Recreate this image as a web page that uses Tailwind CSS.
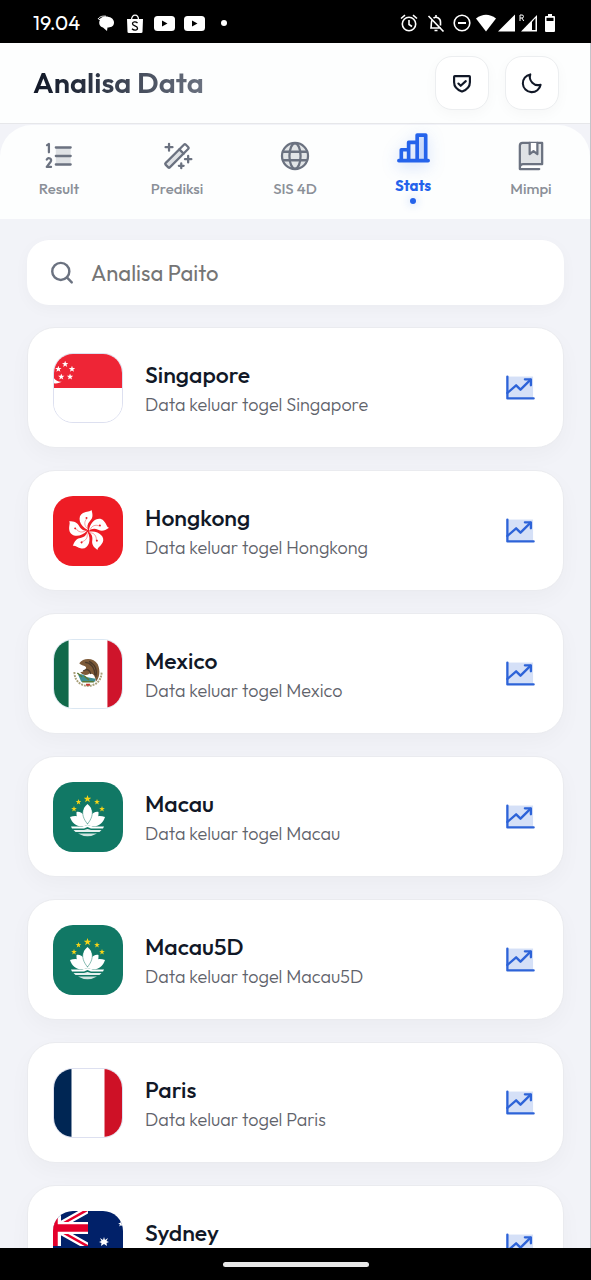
<!DOCTYPE html>
<html lang="id">
  <head>
    <meta charset="UTF-8" />
    <meta name="viewport" content="width=device-width, initial-scale=1.0" />
    <title>Analisa Data</title>
    <script src="https://cdn.jsdelivr.net/npm/@tailwindcss/browser@4"></script>
  </head>
  <body class="bg-black font-['Outfit',Lato,sans-serif]">
    <!-- Shared shapes -->
    <svg class="hidden" aria-hidden="true">
      <symbol id="chart" viewBox="0 0 256 256">
        <path d="M32 48H220V208H32Z" fill="currentColor" opacity=".2" />
        <g fill="none" stroke="currentColor" stroke-width="17" stroke-linecap="round" stroke-linejoin="round">
          <path d="M32 48V208H224" />
          <path d="M32 168L96 112L128 144L200 72" />
          <path d="M160 68H204V112" />
        </g>
      </symbol>
      <symbol id="star" viewBox="0 0 20 20">
        <path d="M10 0L12.4 6.8L19.5 6.9L13.8 11.2L15.9 18.1L10 14L4.1 18.1L6.2 11.2L.5 6.9L7.6 6.8Z" />
      </symbol>
      <symbol id="youtube" viewBox="0 0 21 15">
        <rect width="21" height="15" rx="3.5" fill="#fff" />
        <path d="M8 4.5L13.5 7.5L8 10.5Z" fill="#000" />
      </symbol>
      <symbol id="macau" viewBox="0 0 70 70">
        <rect width="70" height="70" fill="#117865" />
        <g fill="#f7d417">
          <use href="#star" x="30.5" y="13" width="8" height="8" />
          <use href="#star" x="22.5" y="17" width="6" height="6" />
          <use href="#star" x="41" y="17" width="6" height="6" />
          <use href="#star" x="18" y="24" width="6" height="6" />
          <use href="#star" x="46" y="24" width="6" height="6" />
        </g>
        <g fill="#fff">
          <path d="M34.5 22C40.5 27 41.5 34 34.5 42C27.500 34 28.500 27 34.500 22Z" />
          <path d="M23.5 30C29 29 33 34 34.500 43C26 42 23 36 23.500 30Z" />
          <path d="M45.5 30C40 29 36 34 34.500 43C43 42 46 36 45.500 30Z" />
          <path d="M17 35C25 32 32 36 34.500 43C27 46 20 44 17 35Z" />
          <path d="M52 35C44 32 37 36 34.500 43C42 46 49 44 52 35Z" />
          <path d="M18 44.5H29L34.5 43L40 44.5H51L50 46.5H38L34.5 45L31 46.5H19Z" />
          <path d="M20.5 48H31L34.5 47L38 48H48.5L46.5 50H22.5Z" opacity=".9" />
          <path d="M25 51.5H44Q34.5 57 25 51.5Z" opacity=".8" />
        </g>
        <path d="M30.5 26C28.500 32 30.500 37 34.500 42C38.500 37 40.500 32 38.500 26" fill="none" stroke="#117865" stroke-width=".5" />
      </symbol>
    </svg>

    <div class="flex h-screen flex-col overflow-hidden">
      <!-- Status bar -->
      <div class="flex h-[43px] shrink-0 items-center justify-between bg-black pr-[36px] pl-[33px] pt-[3px] text-white">
        <div class="flex items-center">
          <span class="w-[64px] text-[20px] leading-5">19.04</span>
          <svg class="mr-3 h-[17px] w-[18px]" viewBox="0 0 18 17"><path d="M4 3C8 0 17 2 17 7.5C17 12 13 12.5 10.5 12.5L10 16L6 12.5C2 11.5 1.5 7 3 5L1 5Z" fill="#fff" /><path d="M1 4C3 1 6 1 9 1.2" stroke="#fff" stroke-width="1" fill="none" /></svg>
          <svg class="mr-[11px] h-[19px] w-4" viewBox="0 0 16 19"><path d="M0 5H16L15.5 18Q15.5 19 14 19H2Q.5 19 .5 18Z" fill="#fff" /><path d="M4.5 6C4.5-.5 11.5-.5 11.5 6" stroke="#fff" fill="none" stroke-width="1.3" /><path d="M10.5 9C9 7.5 5.5 7.5 5.5 9.8C5.5 12.3 10.5 11.5 10.5 14.2C10.5 16.7 6.5 16.5 5 14.8" stroke="#000" fill="none" stroke-width="1.3" /></svg>
          <svg class="mr-[9px] h-[15px] w-[21px]"><use href="#youtube" /></svg>
          <svg class="mr-4 h-[15px] w-[21px]"><use href="#youtube" /></svg>
          <span class="size-[6px] rounded-full bg-white"></span>
        </div>
        <div class="flex items-center">
          <svg class="mr-[9px] size-[18px]" viewBox="0 0 18 18" fill="none" stroke="#fff" stroke-width="1.6"><circle cx="9" cy="10" r="6.7" /><path d="M9 6V10.5L12 12.5M1 4.5L5 1.2M17 4.5L13 1.2" /></svg>
          <svg class="mr-2 size-[18px]" viewBox="0 0 18 18" fill="none" stroke="#fff" stroke-width="1.6"><path d="M5 6C4 8 4.5 11 4 14H14M6.5 4.2C9 2 13.5 4 13.5 8V11.5M9 1V3.5M7.5 16.5H10.5M1.5 2L16.5 17.5" /></svg>
          <svg class="mr-[5px] size-[18px]" viewBox="0 0 18 18" fill="none" stroke="#fff" stroke-width="1.6"><circle cx="9" cy="9" r="7.8" /><path d="M5 9H13" stroke-width="2" /></svg>
          <svg class="mr-[2px] h-[18px] w-5" viewBox="0 0 20 18"><path d="M0 4.5Q10-3 20 4.5L10 17.5Z" fill="#fff" /></svg>
          <svg class="mr-1 h-[18px] w-[17px]" viewBox="0 0 17 18"><path d="M17 .5V17.5H0Z" fill="#fff" /></svg>
          <svg class="mr-[7px] h-[18px] w-[19px]" viewBox="0 0 19 18"><path d="M18 1V17.5H2Z" fill="#fff" /><path d="M13 8L16.5 4V16H13Z" fill="#000" /><path d="M1 7V1H3Q4.5 1 4.5 2.5T3 4H1M3 4L4.7 7" fill="none" stroke="#fff" /></svg>
          <svg class="h-[18px] w-[10px]" viewBox="0 0 10 18"><path d="M3 0H7V2H9Q10 2 10 3V17Q10 18 9 18H1Q0 18 0 17V3Q0 2 1 2H3Z" fill="#fff" /><path d="M1.5 3.8H8.5V7H1.5Z" fill="#000" /></svg>
        </div>
      </div>

      <div class="flex min-h-0 flex-1 flex-col border-r border-[#c3c5ca] bg-[#f2f3f8]">
        <!-- Header -->
        <header class="flex h-[81px] shrink-0 items-center justify-between border-b border-[#e6e7ea] bg-[#fdfefe] pr-[31px] pl-[33px]">
          <h1 class="bg-gradient-to-r from-[#111827] to-[#6b7280] bg-clip-text text-[29px] leading-9 font-semibold text-transparent">Analisa Data</h1>
          <div class="flex gap-4">
            <button type="button" aria-label="Keamanan" class="flex size-[54px] items-center justify-center rounded-[17px] border border-[#eceef0] bg-white text-[#111827] shadow-[0_4px_14px_rgba(0,0,0,0.03)]">
              <svg class="size-[22px]" viewBox="0 0 256 256" fill="none" stroke="currentColor" stroke-width="25" stroke-linecap="round" stroke-linejoin="round"><path d="M36 118V56A8 8 0 0 1 44 48H212A8 8 0 0 1 220 56V118C220 194 143 221 128 227C113 221 36 194 36 118Z" /><path d="M172 106L113 160L86 134" /></svg>
            </button>
            <button type="button" aria-label="Mode gelap" class="flex size-[54px] items-center justify-center rounded-[17px] border border-[#eceef0] bg-white text-[#111827] shadow-[0_4px_14px_rgba(0,0,0,0.03)]">
              <svg class="size-[22px]" viewBox="0 0 256 256" fill="none" stroke="currentColor" stroke-width="24" stroke-linecap="round" stroke-linejoin="round"><path d="M108 28A96 96 0 0 0 228 148A104 104 0 1 1 108 28Z" /></svg>
            </button>
          </div>
        </header>

        <!-- Tabs -->
        <nav class="mt-px grid h-[94px] shrink-0 grid-cols-5 rounded-t-[32px] bg-[#fdfefe] text-[15px] leading-5 font-medium text-[#8b9098]">
          <a href="#result" class="flex flex-col items-center gap-[6px] pt-[14px]">
            <svg class="size-[34px] text-[#6b7280]" viewBox="0 0 256 256" fill="none" stroke="currentColor" stroke-width="17" stroke-linecap="round" stroke-linejoin="round"><path d="M104 64H216V192H104Z" fill="currentColor" stroke="none" opacity=".2" /><path d="M104 64H216M104 128H216M104 192H216M38 46L52 38V100M68 210H36L65 171C80 148 47 134 36 155" /></svg>
            Result
          </a>
          <a href="#prediksi" class="flex flex-col items-center gap-[6px] pt-[14px]">
            <svg class="size-[34px] text-[#6b7280]" viewBox="0 0 256 256" fill="none" stroke="currentColor" stroke-width="17" stroke-linecap="round" stroke-linejoin="round"><path d="M148 76L180 108L70 218L38 186Z" fill="currentColor" stroke="none" opacity=".2" /><rect x="21" y="105" width="214" height="45" rx="8" transform="rotate(-45 128 128)" /><path d="M146 78L178 110M68 36V88M42 62H94M212 128V176M188 152H236M160 184V220M142 202H178" /></svg>
            Prediksi
          </a>
          <a href="#sis4d" class="flex flex-col items-center gap-[6px] pt-[14px]">
            <svg class="size-[34px] text-[#6b7280]" viewBox="0 0 256 256" fill="none" stroke="currentColor" stroke-width="17"><circle cx="128" cy="128" r="98" fill="currentColor" fill-opacity=".18" /><path d="M37 96H219M37 160H219" /><ellipse cx="128" cy="128" rx="42" ry="96" /></svg>
            SIS 4D
          </a>
          <a href="#stats" class="flex flex-col items-center pt-1 font-bold text-[#2563eb]" aria-current="page">
            <svg class="mb-2 size-[39px] drop-shadow-[0_4px_8px_rgba(37,99,235,0.25)]" viewBox="0 0 256 256" fill="none" stroke="currentColor" stroke-width="24" stroke-linecap="round" stroke-linejoin="round"><path d="M152 40H208V208H152Z" fill="currentColor" stroke="none" opacity=".15" /><path d="M32 208H224M48 208V136H96M96 208V88H152M152 208V40H208V208" /></svg>
            Stats
            <span class="mt-[2px] size-[6px] rounded-full bg-[#2563eb] shadow-[0_0_10px_rgba(37,99,235,0.4)]"></span>
          </a>
          <a href="#mimpi" class="flex flex-col items-center gap-[6px] pt-[14px]">
            <svg class="size-[34px] text-[#6b7280]" viewBox="0 0 256 256" fill="none" stroke="currentColor" stroke-width="17" stroke-linecap="round" stroke-linejoin="round"><path d="M44 216A24 24 0 0 1 68 190H212V30H64A20 20 0 0 0 44 50ZV226H190" fill="currentColor" fill-opacity=".2" /><path d="M118 30V114L147 92L176 114V30" fill="#fff" /></svg>
            Mimpi
          </a>
        </nav>

        <main class="min-h-0 flex-1 overflow-y-auto pt-[21px] pr-[26px] pl-[27px] [scrollbar-width:none]">
          <label class="mb-[22px] flex h-[65px] items-center rounded-[22px] bg-white pr-5 pl-[22px] shadow-[0_4px_16px_rgba(0,0,0,0.03)]">
            <svg class="mr-4 size-[26px] shrink-0 text-[#6b7280]" viewBox="0 0 256 256" fill="none" stroke="currentColor" stroke-width="24" stroke-linecap="round"><circle cx="116" cy="112" r="84" /><path d="M176 172L224 220" /></svg>
            <input type="search" aria-label="Analisa Paito" placeholder="Analisa Paito" class="min-w-0 flex-1 bg-transparent text-[22px] leading-7 text-[#111827] outline-none placeholder:text-[#757575]" />
          </label>

          <!-- Market list -->
          <ul class="flex flex-col gap-[22px] pb-6">
            <li>
              <a href="#singapore" class="flex h-[121px] items-center gap-[22px] rounded-[28px] border border-[#eaebef] bg-white px-[25px] shadow-[0_8px_22px_rgba(0,0,0,0.03)]">
                <svg class="size-[70px] shrink-0 rounded-[20px] border border-[#dde0f0]" viewBox="0 0 70 70">
                  <rect width="70" height="70" fill="#fff" />
                  <rect width="70" height="35" fill="#ee2536" />
                  <g fill="#fff">
                    <use href="#star" x="8" y="7" width="7" height="7" />
                    <use href="#star" x="1" y="12" width="7" height="7" />
                    <use href="#star" x="15" y="12" width="7" height="7" />
                    <use href="#star" x="4" y="20" width="7" height="7" />
                    <use href="#star" x="13" y="20" width="7" height="7" />
                    <path d="M0 25Q3 29 8 28.5Q3 31 0 30Z" />
                  </g>
                </svg>
                <div class="flex-1 pt-[3px]">
                  <h2 class="text-[23px] leading-7 font-medium text-[#111827]">Singapore</h2>
                  <p class="mt-1 text-[18px] leading-6 font-light text-[#5f636b]">Data keluar togel Singapore</p>
                </div>
                <svg class="size-[35px] shrink-0 text-[#2d63d8]"><use href="#chart" /></svg>
              </a>
            </li>
            <li>
              <a href="#hongkong" class="flex h-[121px] items-center gap-[22px] rounded-[28px] border border-[#eaebef] bg-white px-[25px] shadow-[0_8px_22px_rgba(0,0,0,0.03)]">
                <svg class="size-[70px] shrink-0 rounded-[20px]" viewBox="0 0 70 70">
                  <rect width="70" height="70" fill="#ee1c25" />
                  <g id="petal">
                    <path d="M35 34C26 30 24 20 30 17C34 15 37 16 38.5 14C40 19 40 22 37 25C34 28 34 31 35 34Z" fill="#fff" />
                    <path d="M35 33C31 30 31 26 33.5 23" fill="none" stroke="#ee1c25" stroke-width=".4" />
                    <circle cx="33.5" cy="22" r="1" fill="#ee1c25" />
                  </g>
                  <use href="#petal" transform="rotate(72 35 35)" />
                  <use href="#petal" transform="rotate(144 35 35)" />
                  <use href="#petal" transform="rotate(216 35 35)" />
                  <use href="#petal" transform="rotate(288 35 35)" />
                </svg>
                <div class="flex-1 pt-[3px]">
                  <h2 class="text-[23px] leading-7 font-medium text-[#111827]">Hongkong</h2>
                  <p class="mt-1 text-[18px] leading-6 font-light text-[#5f636b]">Data keluar togel Hongkong</p>
                </div>
                <svg class="size-[35px] shrink-0 text-[#2d63d8]"><use href="#chart" /></svg>
              </a>
            </li>
            <li>
              <a href="#mexico" class="flex h-[121px] items-center gap-[22px] rounded-[28px] border border-[#eaebef] bg-white px-[25px] shadow-[0_8px_22px_rgba(0,0,0,0.03)]">
                <svg class="size-[70px] shrink-0 rounded-[20px] border border-[#dbe7f2]" viewBox="0 0 70 70">
                  <rect width="70" height="70" fill="#fff" />
                  <rect width="15" height="70" fill="#11694a" />
                  <rect x="55" width="15" height="70" fill="#cf142b" />
                  <path d="M21 33C21 52 49 52 49 33" fill="none" stroke="#a9a07a" stroke-width="2" stroke-dasharray="2 1" />
                  <path d="M26 24C30 18 41 18 45 25C48 32 47 39 43 43C43 37 39 33 36 35C33 37 29 36 27 33C30 33 33 31 33 28C31 26 29 27 26 24Z" fill="#7d5a38" />
                  <path d="M32 23C37 23 42 28 42 36M36 22C42 25 45 30 43 38M30 32Q36 28 38 35" fill="none" stroke="#4a3828" stroke-width="1.3" />
                  <path d="M25 36Q30 34 33 38L43 40L42 43H28Z" fill="#3d8f93" />
                  <path d="M24 34L29 38M31 37L36 41M29 43H41" stroke="#5b7a37" stroke-width="1.5" />
                  <path d="M33 46H37" stroke="#c33a31" stroke-width="2" />
                </svg>
                <div class="flex-1 pt-[3px]">
                  <h2 class="text-[23px] leading-7 font-medium text-[#111827]">Mexico</h2>
                  <p class="mt-1 text-[18px] leading-6 font-light text-[#5f636b]">Data keluar togel Mexico</p>
                </div>
                <svg class="size-[35px] shrink-0 text-[#2d63d8]"><use href="#chart" /></svg>
              </a>
            </li>
            <li>
              <a href="#macau" class="flex h-[121px] items-center gap-[22px] rounded-[28px] border border-[#eaebef] bg-white px-[25px] shadow-[0_8px_22px_rgba(0,0,0,0.03)]">
                <svg class="size-[70px] shrink-0 rounded-[20px]"><use href="#macau" /></svg>
                <div class="flex-1 pt-[3px]">
                  <h2 class="text-[23px] leading-7 font-medium text-[#111827]">Macau</h2>
                  <p class="mt-1 text-[18px] leading-6 font-light text-[#5f636b]">Data keluar togel Macau</p>
                </div>
                <svg class="size-[35px] shrink-0 text-[#2d63d8]"><use href="#chart" /></svg>
              </a>
            </li>
            <li>
              <a href="#macau5d" class="flex h-[121px] items-center gap-[22px] rounded-[28px] border border-[#eaebef] bg-white px-[25px] shadow-[0_8px_22px_rgba(0,0,0,0.03)]">
                <svg class="size-[70px] shrink-0 rounded-[20px]"><use href="#macau" /></svg>
                <div class="flex-1 pt-[3px]">
                  <h2 class="text-[23px] leading-7 font-medium text-[#111827]">Macau5D</h2>
                  <p class="mt-1 text-[18px] leading-6 font-light text-[#5f636b]">Data keluar togel Macau5D</p>
                </div>
                <svg class="size-[35px] shrink-0 text-[#2d63d8]"><use href="#chart" /></svg>
              </a>
            </li>
            <li>
              <a href="#paris" class="flex h-[121px] items-center gap-[22px] rounded-[28px] border border-[#eaebef] bg-white px-[25px] shadow-[0_8px_22px_rgba(0,0,0,0.03)]">
                <svg class="size-[70px] shrink-0 rounded-[20px] border border-[#dde0f0]" viewBox="0 0 70 70">
                  <rect width="70" height="70" fill="#fff" />
                  <rect width="18" height="70" fill="#002654" />
                  <rect x="52" width="18" height="70" fill="#ce1126" />
                </svg>
                <div class="flex-1 pt-[3px]">
                  <h2 class="text-[23px] leading-7 font-medium text-[#111827]">Paris</h2>
                  <p class="mt-1 text-[18px] leading-6 font-light text-[#5f636b]">Data keluar togel Paris</p>
                </div>
                <svg class="size-[35px] shrink-0 text-[#2d63d8]"><use href="#chart" /></svg>
              </a>
            </li>
            <li>
              <a href="#sydney" class="flex h-[121px] items-center gap-[22px] rounded-[28px] border border-[#eaebef] bg-white px-[25px] shadow-[0_8px_22px_rgba(0,0,0,0.03)]">
                <svg class="size-[70px] shrink-0 rounded-[20px]" viewBox="0 0 70 70">
                  <rect width="70" height="70" fill="#012169" />
                  <svg width="35" height="35" viewBox="0 0 35 35">
                    <path d="M2 17L36-2M2 17L36 36" stroke="#fff" stroke-width="7" />
                    <path d="M2 17L36-2M2 17L36 36" stroke="#e4002b" stroke-width="2.5" />
                    <path d="M0 17H35M2 0V35" stroke="#fff" stroke-width="12" />
                    <path d="M0 17H35M1 0V35" stroke="#e4002b" stroke-width="7.5" />
                  </svg>
                  <path d="M51 26L52 29L55 27L53.5 30L56 31L53.5 32L54 35L51 33L48 35L48.5 32L46 31L48.5 30L47 27L50 29Z" fill="#fff" />
                  <use href="#star" x="65" y="10" width="6" height="6" fill="#fff" />
                  <path d="M17 42L19 49L26 46L22 52L28 56L21 57L22 64L17 59L12 64L13 57L6 56L12 52L8 46L15 49Z" fill="#fff" />
                </svg>
                <div class="flex-1 pt-[3px]">
                  <h2 class="text-[23px] leading-7 font-medium text-[#111827]">Sydney</h2>
                  <p class="mt-1 text-[18px] leading-6 font-light text-[#5f636b]">Data keluar togel Sydney</p>
                </div>
                <svg class="size-[35px] shrink-0 text-[#2d63d8]"><use href="#chart" /></svg>
              </a>
            </li>
          </ul>
        </main>
      </div>

      <!-- Gesture bar -->
      <div class="flex h-8 shrink-0 items-center justify-center bg-black">
        <span class="h-[5px] w-[146px] rounded-full bg-[#e8e8e8]"></span>
      </div>
    </div>
  </body>
</html>
